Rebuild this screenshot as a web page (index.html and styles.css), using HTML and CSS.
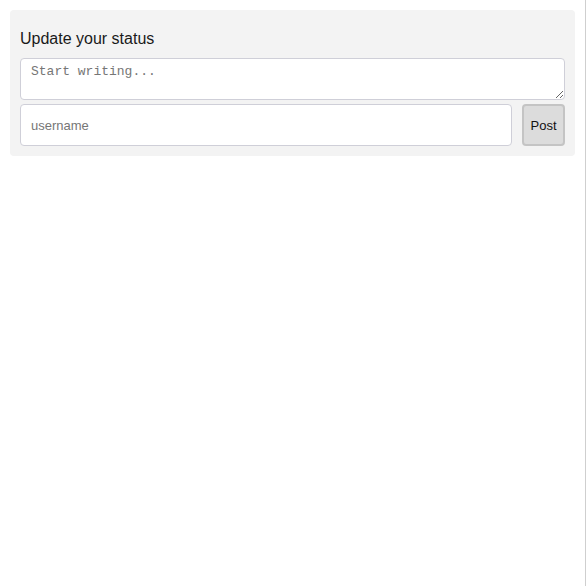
FILE: index.html
```html
<!DOCTYPE html>
<html>
<head>
<meta charset="utf-8">
<link rel="stylesheet" href="styles.css">
</head>
<body>
<div class="panel">
  <h2 class="title">Update your status</h2>
  <textarea class="status" placeholder="Start writing..."></textarea>
  <div class="row">
    <input class="user" type="text" placeholder="username">
    <button class="post">Post</button>
  </div>
</div>
</body>
</html>
```
FILE: styles.css
```css
html {
  width: 585px;
  min-height: 586px;
  border-right: 1px solid #cfcfcf;
}
body {
  margin: 10px;
  font-family: "Liberation Sans", Arial, sans-serif;
}
.panel {
  background: #f3f3f3;
  border-radius: 4px;
  padding: 10px;
  display: flex;
  flex-direction: column;
}
.title {
  margin: 10px 0 10px;
  font-size: 16px;
  font-weight: normal;
  line-height: 18px;
  color: #1a1a1a;
}
.status {
  height: 42px;
  box-sizing: border-box;
  border: 1px solid #cfcfd8;
  border-radius: 4px;
  padding: 5px 10px;
  font-family: "Liberation Mono", "Courier New", monospace;
  font-size: 13px;
  margin: 0;
  display: block;
  resize: vertical;
}
.status::placeholder, .user::placeholder {
  color: #767676;
}
.row {
  display: flex;
  gap: 10px;
  margin-top: 4px;
}
.user {
  flex: 1;
  height: 42px;
  box-sizing: border-box;
  border: 1px solid #cfcfd8;
  border-radius: 4px;
  padding: 0 10px;
  font-family: "Liberation Sans", Arial, sans-serif;
  font-size: 13px;
  margin: 0;
}
.post {
  width: 43px;
  height: 42px;
  box-sizing: border-box;
  background: #dcdcdc;
  border: 2px solid #c4c4c4;
  border-radius: 4px;
  font-family: "Liberation Sans", Arial, sans-serif;
  font-size: 13px;
  color: #111;
  padding: 0;
  margin: 0;
}
```
